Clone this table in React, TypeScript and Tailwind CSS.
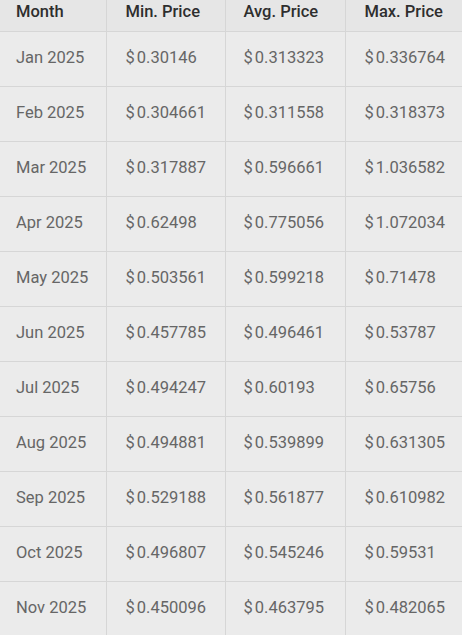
const rows: [string, string, string, string][] = [
  ['Jan 2025', '0.30146', '0.313323', '0.336764'],
  ['Feb 2025', '0.304661', '0.311558', '0.318373'],
  ['Mar 2025', '0.317887', '0.596661', '1.036582'],
  ['Apr 2025', '0.62498', '0.775056', '1.072034'],
  ['May 2025', '0.503561', '0.599218', '0.71478'],
  ['Jun 2025', '0.457785', '0.496461', '0.53787'],
  ['Jul 2025', '0.494247', '0.60193', '0.65756'],
  ['Aug 2025', '0.494881', '0.539899', '0.631305'],
  ['Sep 2025', '0.529188', '0.561877', '0.610982'],
  ['Oct 2025', '0.496807', '0.545246', '0.59531'],
  ['Nov 2025', '0.450096', '0.463795', '0.482065'],
]

function Price({ v }: { v: string }) {
  return (
    <span>
      <span className="mr-[2px]">$</span>
      {v}
    </span>
  )
}

export default function App() {
  return (
    <div className="w-[462px] h-[635px] overflow-hidden bg-[#ebebeb] font-['Roboto',sans-serif]">
      <table className="w-[462px] border-collapse table-fixed">
        <colgroup>
          <col className="w-[106px]" />
          <col className="w-[119px]" />
          <col className="w-[120px]" />
          <col className="w-[117px]" />
        </colgroup>
        <thead>
          <tr className="h-[31px] bg-[#e6e6e6] text-[#2e2e2e] text-[16.5px] text-left align-top">
            <th className="pl-4 pt-[0px] font-medium border-b border-r border-[#d6d6d6]">Month</th>
            <th className="pl-[19px] pt-[0px] font-medium border-b border-r border-[#d6d6d6]">Min. Price</th>
            <th className="pl-[18px] pt-[0px] font-medium border-b border-r border-[#d6d6d6]">Avg. Price</th>
            <th className="pl-[19px] pt-[0px] font-medium border-b border-r border-[#d6d6d6]">Max. Price</th>
          </tr>
        </thead>
        <tbody className="text-[16.5px] text-[#666]">
          {rows.map((r) => (
            <tr key={r[0]} className="h-[55px]">
              <td className="pl-4 border-b border-r border-[#d6d6d6]">{r[0]}</td>
              <td className="pl-[19px] border-b border-r border-[#d6d6d6]"><Price v={r[1]} /></td>
              <td className="pl-[18px] border-b border-r border-[#d6d6d6]"><Price v={r[2]} /></td>
              <td className="pl-[19px] border-b border-r border-[#d6d6d6]"><Price v={r[3]} /></td>
            </tr>
          ))}
        </tbody>
      </table>
    </div>
  )
}
